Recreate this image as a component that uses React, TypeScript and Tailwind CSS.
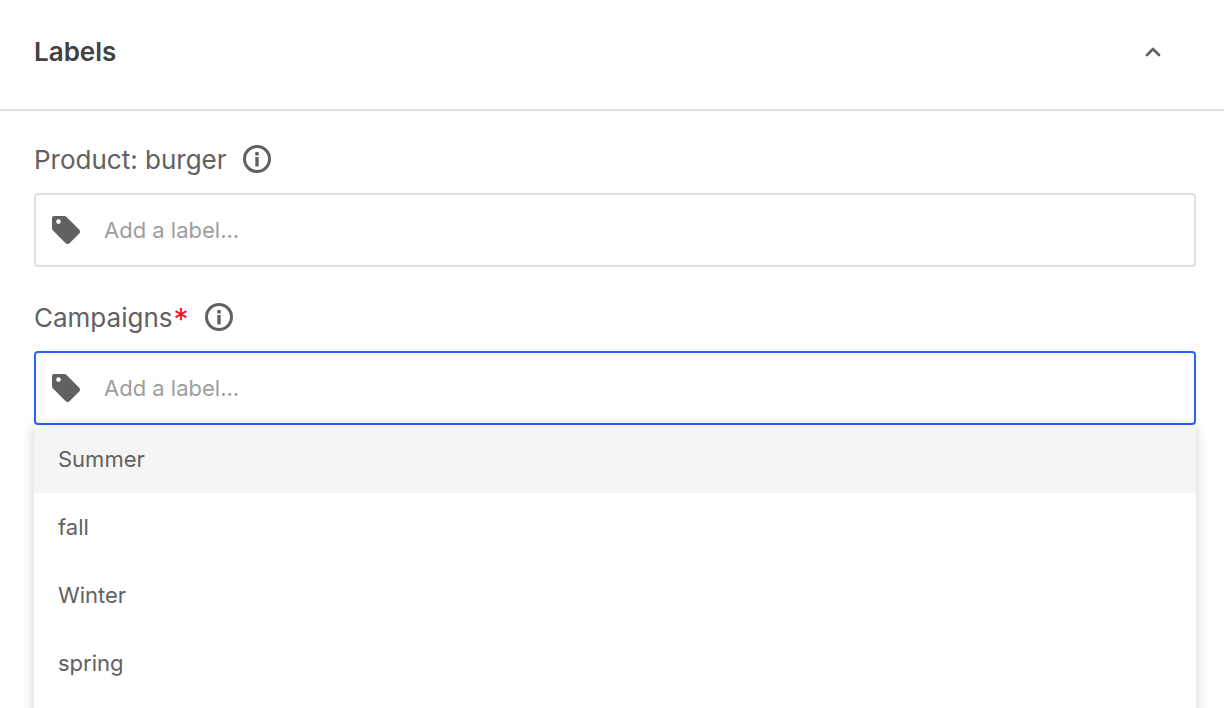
import type { ReactNode } from "react";
import { ChevronUp } from "lucide-react";

function InfoIcon() {
  return (
    <svg width="28" height="28" viewBox="0 0 28 28" fill="none" aria-hidden>
      <circle cx="14" cy="14" r="12.5" stroke="#616161" strokeWidth="3" />
      <circle cx="14" cy="8.8" r="2" fill="#616161" />
      <rect x="12.3" y="12" width="3.4" height="9.4" rx="0.6" fill="#616161" />
    </svg>
  );
}

function TagIcon() {
  return (
    <svg width="30" height="30" viewBox="0 0 30 30" aria-hidden>
      <path
        fillRule="evenodd"
        fill="#616161"
        d="M3 1h10.2c.9 0 1.700.3 2.300.9l12.600 12.700c1.200 1.200 1.200 3 0 4.200l-9.400 9.300c-1.200 1.200-3 1.200-4.200 0L2 15.500c-.6-.6-1-1.400-1-2.300V3c0-1.100.9-2 2-2zm4.500 3.300a2.300 2.300 0 1 0 0 4.600 2.300 2.300 0 0 0 0-4.600z"
      />
    </svg>
  );
}

function Field({ label, focused }: { label: ReactNode; focused?: boolean }) {
  return (
    <div>
      <div className="flex h-[74px] items-center gap-4 pt-[6px] text-[26px] text-[#616161]">
        <span>{label}</span>
        <InfoIcon />
      </div>
      <div
        className={[
          "flex h-[74px] items-center rounded border-2 bg-white pl-[15px]",
          focused ? "border-[#2962ff]" : "border-[#e0e0e0]",
        ].join(" ")}
      >
        <TagIcon />
        <span className="ml-[23px] text-[22px] text-[#9e9e9e]">Add a label...</span>
      </div>
    </div>
  );
}

const options = ["Summer", "fall", "Winter", "spring"];

export default function App() {
  return (
    <div className="h-[708px] overflow-hidden bg-white font-['Inter',sans-serif]">
      <div className="flex h-[111px] items-center justify-between border-b-2 border-[#e0e0e0] pl-[34px] pr-[59px] pb-[6px]">
        <h2 className="text-[26px] font-semibold text-[#424242]">Labels</h2>
        <ChevronUp size={24} strokeWidth={2.7} className="text-[#616161]" />
      </div>
      <div className="flex flex-col gap-[10px] pl-[34px] pr-[28px] pt-2">
        <Field label="Product: burger" />
        <div>
          <Field
            focused
            label={
              <>
                Campaigns
                <span className="ml-[1px] align-[-3px] text-[30px] leading-none text-[#f5101e]">*</span>
              </>
            }
          />
          <ul className="h-[400px] bg-white shadow-[0_2px_12px_rgba(0,0,0,0.18)]">
            {options.map((o, i) => (
              <li
                key={o}
                className={[
                  "flex h-[68px] items-center pl-6 text-[22px] text-[#616161]",
                  i === 0 ? "bg-[#f5f5f5]" : "",
                ].join(" ")}
              >
                {o}
              </li>
            ))}
          </ul>
        </div>
      </div>
    </div>
  );
}
